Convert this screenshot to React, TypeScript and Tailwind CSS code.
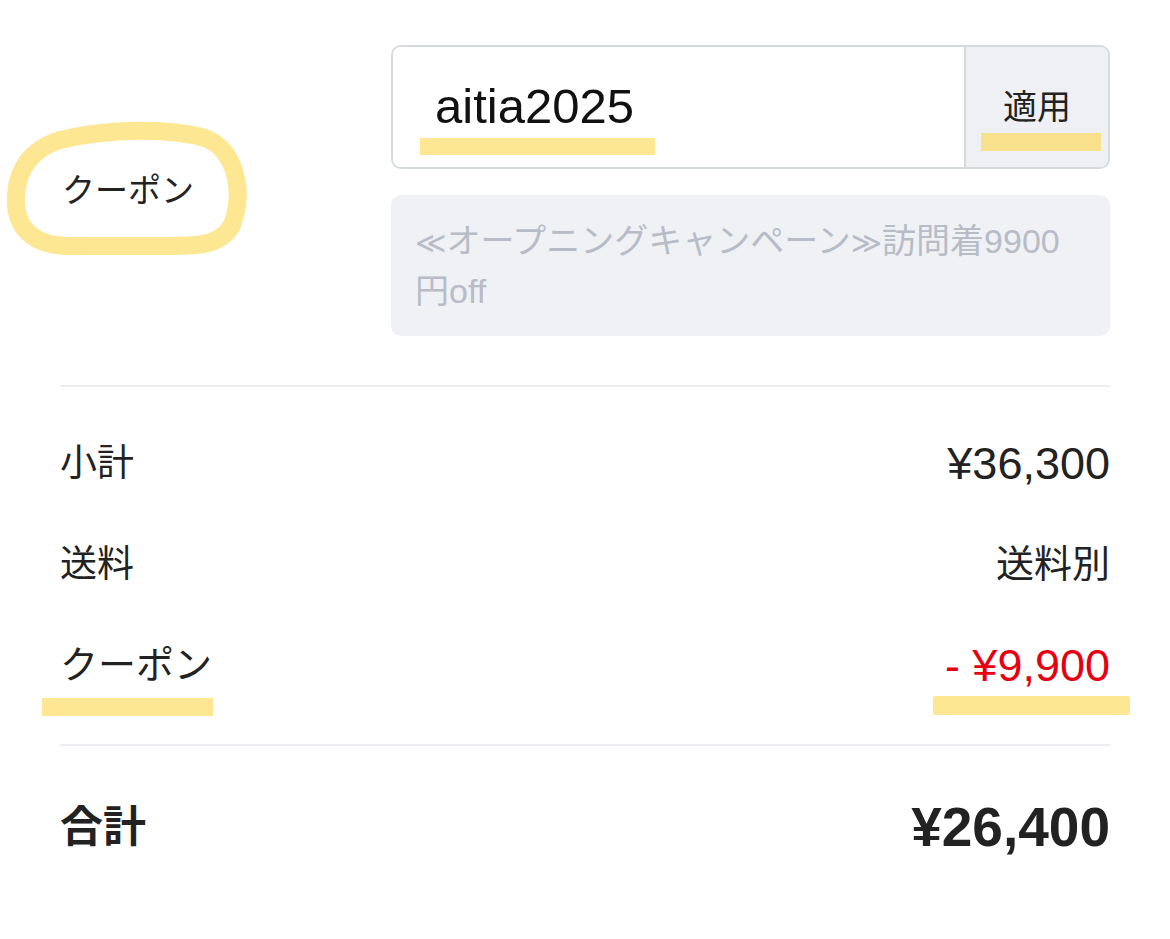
import React from "react";

const FONT = { fontFamily: '"Liberation Sans", "Noto Sans CJK JP", sans-serif' };
const SMALL = { fontFamily: '"DejaVu Sans", "Noto Sans CJK JP", sans-serif' };

export default function App() {
  return (
    <div
      className="relative w-[1170px] h-[939px] bg-white overflow-hidden text-[#222222]"
      style={FONT}
    >
      <div className="px-[60px] pt-[45px]">
        {/* Coupon input section */}
        <div className="flex items-center">
          <div className="w-[331px] text-[33px] leading-none pl-[2px]">クーポン</div>
          <div className="flex-1 flex flex-col gap-[26px]">
            <div className="flex h-[124px] border-2 border-[#d5d9e0] rounded-[10px] overflow-hidden">
              <div className="flex-1 flex items-center pl-[42px] text-[49px] text-[#111111] bg-white">
                aitia2025
              </div>
              <div className="w-[144px] flex items-center justify-center border-l-2 border-[#d5d9e0] bg-[#eef0f4] text-[34px]">
                適用
              </div>
            </div>
            <div className="rounded-[10px] bg-[#eff1f5] px-[24px] pt-[22px] pb-[20px] text-[34px] leading-[49px] text-[#b7bcc7]">
              <span style={SMALL} className="text-[30px]">≪</span>
              <span>オープニングキャンペーン</span>
              <span style={SMALL} className="text-[30px]">≫</span>
              <span>訪問着9900</span>
              <br />
              <span>円off</span>
            </div>
          </div>
        </div>

        <div className="mt-[49px] h-[2px] bg-[#eceef2]" />

        <div className="pt-[26px] pb-[28px]">
          <div className="flex h-[101px] items-center justify-between">
            <span className="text-[37px]">小計</span>
            <span className="text-[45px]">¥36,300</span>
          </div>
          <div className="flex h-[101px] items-center justify-between">
            <span className="text-[37px]">送料</span>
            <span className="text-[38px]">送料別</span>
          </div>
          <div className="flex h-[101px] items-center justify-between">
            <span className="text-[38px]">クーポン</span>
            <span className="text-[45px] text-[#e60012]">- ¥9,900</span>
          </div>
        </div>

        <div className="h-[2px] bg-[#eceef2]" />

        <div className="flex h-[162px] items-center justify-between">
          <span className="text-[43px] font-bold">合計</span>
          <span className="text-[55px] font-bold">¥26,400</span>
        </div>
      </div>

      {/* Hand-drawn highlight annotations */}
      <svg
        className="absolute left-0 top-0 pointer-events-none"
        width="1170"
        height="939"
        viewBox="0 0 1170 939"
      >
        <path
          d="M60 140 C 110 128, 170 128, 205 138 C 235 150, 245 190, 232 225 C 220 248, 190 246, 160 246 L 70 246 C 30 246, 14 225, 16 195 C 18 165, 35 148, 60 140 Z"
          fill="none"
          stroke="#fde792"
          strokeWidth="18"
          strokeLinejoin="round"
        />
      </svg>
      <div className="absolute left-[420px] top-[138px] w-[235px] h-[17px] bg-[#fde792]" />
      <div className="absolute left-[981px] top-[133px] w-[120px] h-[18px] bg-[#f9e08c]" />
      <div className="absolute left-[42px] top-[698px] w-[171px] h-[18px] bg-[#fde792]" />
      <div className="absolute left-[933px] top-[696px] w-[197px] h-[19px] bg-[#fde792] rounded-[2px]" />
    </div>
  );
}
